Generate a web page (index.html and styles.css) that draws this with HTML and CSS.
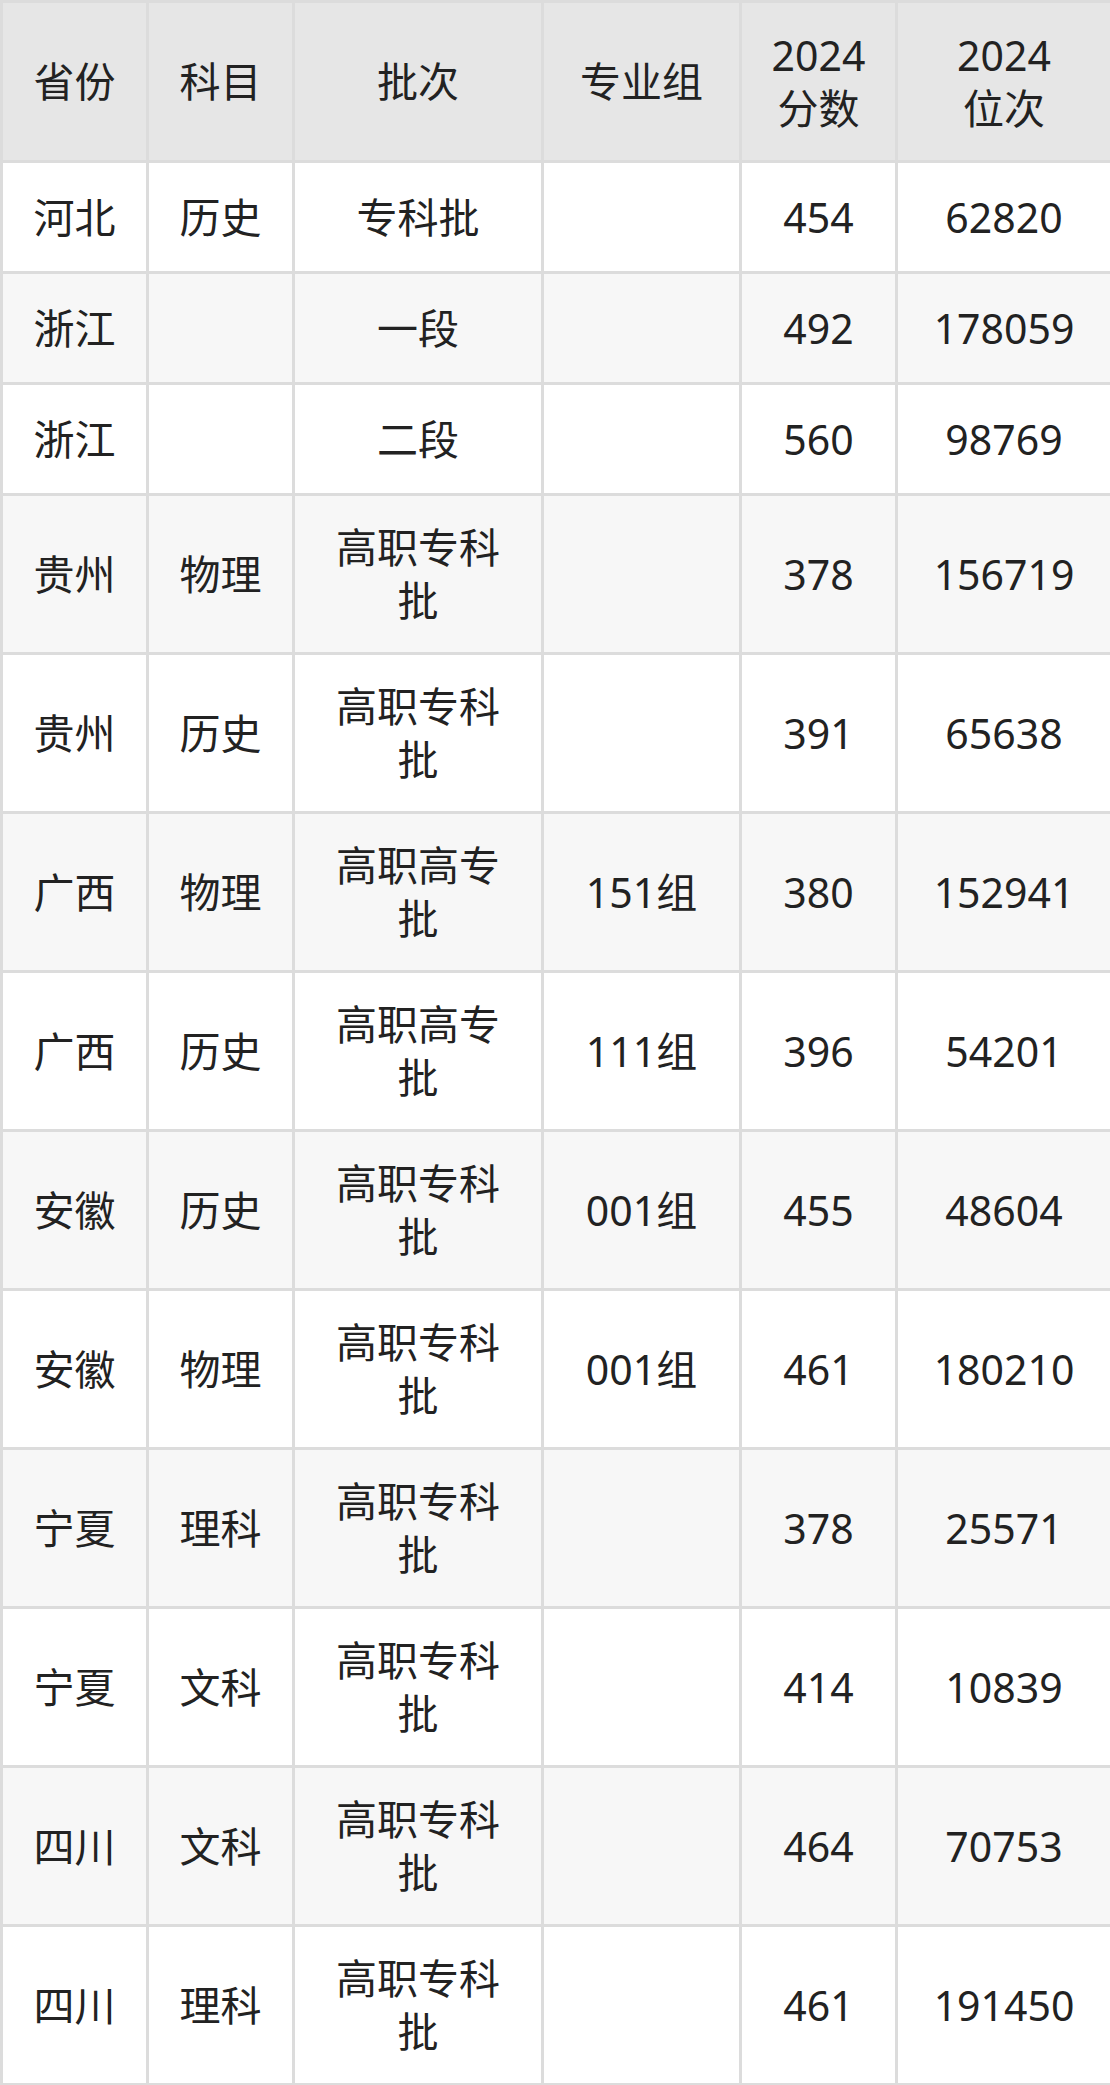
FILE: index.html
```html
<!DOCTYPE html>
<html lang="zh-CN">
<head>
<meta charset="utf-8">
<title>2024 分数位次</title>
<link rel="stylesheet" href="styles.css">
</head>
<body>
<table class="score-table">
  <colgroup>
    <col class="c-prov">
    <col class="c-subj">
    <col class="c-batch">
    <col class="c-group">
    <col class="c-score">
    <col class="c-rank">
  </colgroup>
  <thead>
    <tr class="head">
      <th>省份</th>
      <th>科目</th>
      <th>批次</th>
      <th>专业组</th>
      <th>2024<br>分数</th>
      <th>2024<br>位次</th>
    </tr>
  </thead>
  <tbody>
    <tr><td>河北</td><td>历史</td><td>专科批</td><td></td><td>454</td><td>62820</td></tr>
    <tr><td>浙江</td><td></td><td>一段</td><td></td><td>492</td><td>178059</td></tr>
    <tr><td>浙江</td><td></td><td>二段</td><td></td><td>560</td><td>98769</td></tr>
    <tr><td>贵州</td><td>物理</td><td>高职专科<br>批</td><td></td><td>378</td><td>156719</td></tr>
    <tr><td>贵州</td><td>历史</td><td>高职专科<br>批</td><td></td><td>391</td><td>65638</td></tr>
    <tr><td>广西</td><td>物理</td><td>高职高专<br>批</td><td>151组</td><td>380</td><td>152941</td></tr>
    <tr><td>广西</td><td>历史</td><td>高职高专<br>批</td><td>111组</td><td>396</td><td>54201</td></tr>
    <tr><td>安徽</td><td>历史</td><td>高职专科<br>批</td><td>001组</td><td>455</td><td>48604</td></tr>
    <tr><td>安徽</td><td>物理</td><td>高职专科<br>批</td><td>001组</td><td>461</td><td>180210</td></tr>
    <tr><td>宁夏</td><td>理科</td><td>高职专科<br>批</td><td></td><td>378</td><td>25571</td></tr>
    <tr><td>宁夏</td><td>文科</td><td>高职专科<br>批</td><td></td><td>414</td><td>10839</td></tr>
    <tr><td>四川</td><td>文科</td><td>高职专科<br>批</td><td></td><td>464</td><td>70753</td></tr>
    <tr><td>四川</td><td>理科</td><td>高职专科<br>批</td><td></td><td>461</td><td>191450</td></tr>
  </tbody>
</table>
</body>
</html>
```

FILE: styles.css
```css
html, body {
  margin: 0;
  padding: 0;
  background: #ffffff;
}

.score-table {
  width: 1110px;
  border-collapse: collapse;
  table-layout: fixed;
  font-family: "Noto Sans", "Noto Sans CJK SC", sans-serif;
  font-size: 41px;
  line-height: 53px;
  color: #222222;
}

.c-prov { width: 146px; }
.c-subj { width: 146px; }
.c-batch { width: 249px; }
.c-group { width: 198px; }
.c-score { width: 156px; }
.c-rank { width: 215px; }

.score-table th,
.score-table td {
  border: 3px solid #dcdcdc;
  padding: 25px 4px;
  text-align: center;
  vertical-align: middle;
  font-weight: 400;
  white-space: nowrap;
}

.score-table .head {
  height: 160px;
}

.score-table th {
  background: #e6e6e6;
}

.score-table tbody tr {
  height: 111px;
  background: #ffffff;
}

.score-table tbody tr:nth-child(even) {
  background: #f7f7f7;
}
```
